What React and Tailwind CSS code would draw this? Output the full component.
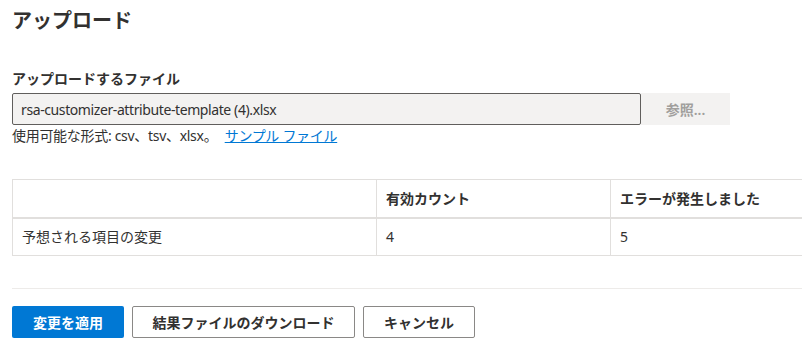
import React from "react";

function App() {
    return (
        <div
            className="w-[802px] h-[347px] overflow-hidden bg-white text-[#323130] font-['Noto_Sans','Noto_Sans_CJK_JP',sans-serif]"
        >
            <div className="pl-3">
                <h1 className="text-[20px] font-semibold leading-[28px] pt-[7px]">アップロード</h1>

                <p className="mt-[34px] text-[14px] font-semibold leading-[20px]">アップロードするファイル</p>

                <div className="flex mt-[4px]">
                    <div className="w-[629px] h-[32px] border border-[#605e5c] rounded-[2px] bg-[#f3f2f1] flex items-center px-2 text-[14px] tracking-[-0.4px]">
                        rsa-customizer-attribute-template (4).xlsx
                    </div>
                    <div className="w-[89px] h-[32px] bg-[#f3f2f1] flex items-center justify-center text-[14px] font-semibold text-[#a19f9d]">
                        参照...
                    </div>
                </div>

                <p className="text-[14px] leading-[20px] mt-[1px] tracking-[-0.3px]">
                    使用可能な形式: csv、tsv、xlsx。{" "}
                    <a className="text-[#0078d4] underline ml-1">サンプル ファイル</a>
                </p>

                <table className="mt-[33px] w-[850px] border-collapse text-[14px]">
                    <thead>
                        <tr className="h-[38px]">
                            <th className="w-[364px] border border-[#e1dfdd] border-b-2"></th>
                            <th className="w-[234px] border border-[#e1dfdd] border-b-2 text-left font-semibold px-[9px]">有効カウント</th>
                            <th className="border border-[#e1dfdd] border-b-2 text-left font-semibold px-[9px]">エラーが発生しました</th>
                        </tr>
                    </thead>
                    <tbody>
                        <tr className="h-[38px]">
                            <td className="border border-[#e1dfdd] px-[9px]">予想される項目の変更</td>
                            <td className="border border-[#e1dfdd] px-[9px]">4</td>
                            <td className="border border-[#e1dfdd] px-[9px]">5</td>
                        </tr>
                    </tbody>
                </table>

                <div className="mt-[32px] border-t border-[#edebe9]" />

                <div className="flex gap-2 mt-[17px]">
                    <button className="w-[112px] h-[32px] rounded-[2px] bg-[#0078d4] text-white text-[14px] font-semibold">変更を適用</button>
                    <button className="w-[223px] h-[32px] rounded-[2px] border border-[#8a8886] bg-white text-[14px] font-semibold">結果ファイルのダウンロード</button>
                    <button className="w-[112px] h-[32px] rounded-[2px] border border-[#8a8886] bg-white text-[14px] font-semibold">キャンセル</button>
                </div>
            </div>
        </div>
    );
}

export default App;
